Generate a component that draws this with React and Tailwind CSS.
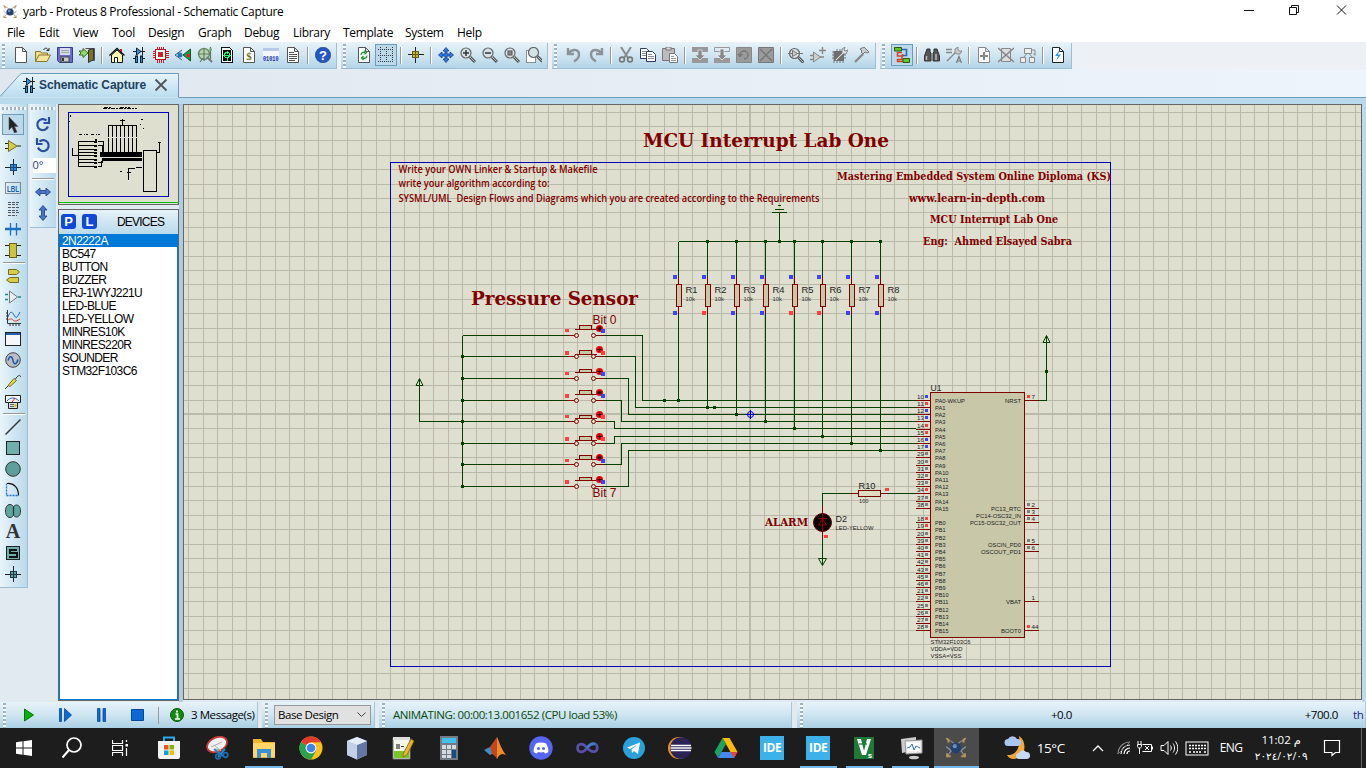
import React from "react";

const UI = "font-['Open_Sans','Noto_Sans',sans-serif]";

function I({ children, s = 16, crisp = false, className = "" }) {
  return (
    <svg
      width={s}
      height={s}
      viewBox="0 0 16 16"
      fill="none"
      shapeRendering={crisp ? "crispEdges" : "auto"}
      className={"shrink-0 " + className}
    >
      {children}
    </svg>
  );
}

const Page = ({ stroke = "#555", fill = "#fff" }) => (
  <path d="M2.500 .5h7l4 4v11h-11z M9.500 .5v4h4" fill={fill} stroke={stroke} />
);
const Lens = ({ children, cx = 6, cy = 6 }) => (
  <>
    <path d={`M${cx + 4} ${cy + 4}l5 5`} stroke="#555" strokeWidth="3" />
    <path d={`M${cx + 4} ${cy + 4}l4.6 4.6`} stroke="#bbb" strokeWidth="1" />
    <circle cx={cx} cy={cy} r="5" fill="#d5e2e8" stroke="#666" strokeWidth="1.200" />
    {children}
  </>
);
const Caps = ({ c = "#2f93d6" }) => (
  <>
    <path d="M2 4.500h12M2 11.500h3M11 11.500h3" stroke="#222" />
    <path d="M5.500 1v7l4.500-3.500z" fill={c} stroke="#123" />
    <path d="M11.500 0v8.500" stroke="#222" />
    <rect x="4.500" y="9" width="2" height="6.500" fill={c} stroke="#123" />
    <rect x="9.500" y="9" width="2" height="6.500" fill={c} stroke="#123" />
  </>
);

const icons = {
  newfile: <I><Page /></I>,
  open: (
    <I>
      <path d="M.5 14V4.500h5l1 1.500h6V8" fill="#f3dc8a" stroke="#8a7428" />
      <path d="M.5 14.500L4 8h11.500l-3.500 6.500z" fill="#f6e49c" stroke="#8a7428" />
      <path d="M8.500 3c2-3 4-2 5 1M11.500 3.500h2.500V1" stroke="#222" />
    </I>
  ),
  save: (
    <I>
      <path d="M.5 .5h15v15h-13l-2-2z" fill="#6a6cc8" stroke="#3a3a90" />
      <rect x="3" y="1" width="10" height="7" fill="#d6daea" />
      <path d="M4 3.500h8M4 5.500h8" stroke="#9aa" />
      <rect x="4" y="10" width="8" height="5" fill="#ccc" stroke="#444" />
      <path d="M6 11v3" stroke="#333" strokeWidth="2" />
    </I>
  ),
  exit: (
    <I>
      <path d="M6.500 1.500h9v12h-3" fill="#ddd" stroke="#555" />
      <path d="M9.500 3l5-1.500v11l-5 3z" fill="#777329" stroke="#333" />
      <path d="M0 4h4V1.500l5 4.500-5 4.500V8H0l2-2z" fill="#8fe06a" stroke="#3a6a20" />
    </I>
  ),
  home: (
    <I>
      <path d="M11 2h2v4h-2z" fill="#d22" />
      <path d="M2.500 8v7.500h11V8L8 3z" fill="#fff7b0" stroke="#111" />
      <path d="M.5 8.500L8 1.500l7.500 7" stroke="#111" strokeWidth="1.300" />
      <path d="M5.500 15.500v-5h3v5" fill="#fff" stroke="#111" />
    </I>
  ),
  caps: <I><Caps /></I>,
  chip: (
    <I crisp>
      <path d="M4.500 0v16M6.500 0v16M8.500 0v16M10.500 0v16M0 4.500h16M0 6.500h16M0 8.500h16M0 10.500h16" stroke="#cc1f1f" />
      <rect x="2.500" y="2.500" width="10" height="10" rx="1" fill="#fff" stroke="#b01818" />
      <rect x="5" y="5" width="5" height="5" fill="#c22" />
    </I>
  ),
  eye: (
    <I>
      <path d="M7 3L0 8l7 5" fill="#cfe2ee" stroke="#357" />
      <circle cx="5" cy="8" r="2.500" fill="#2a78b8" />
      <path d="M15.500 2v12L8 8z" fill="#1d9a45" stroke="#135a2a" />
      <path d="M12 7h3v3h-3z" fill="#d22" />
    </I>
  ),
  gerber: (
    <I>
      <circle cx="7" cy="7" r="5.500" fill="#b9d4b8" stroke="#6d8f6d" strokeWidth="1.500" />
      <path d="M1 7h12M7 1v13M3 15l3-4M13.500 0v12" stroke="#5c7d5c" strokeWidth="1.200" />
      <path d="M10 10l5 5" stroke="#777" strokeWidth="2" />
      <circle cx="13.500" cy="2.500" r="1.500" fill="#6fae6f" />
    </I>
  ),
  design: (
    <I crisp>
      <path d="M2.500 .5h8l3 3v12h-11z" fill="#fff" stroke="#111" />
      <path d="M4 3h8v11H4z" fill="#0a0a0a" />
      <circle cx="8" cy="8" r="2.500" stroke="#2f6" />
      <path d="M4 8.500h8M8.500 4v3M8.500 11v3" stroke="#2f6" />
    </I>
  ),
  bom: (
    <I>
      <Page />
      <text x="8" y="12.500" textAnchor="middle" fontSize="11" fontWeight="700" fontFamily="Liberation Serif,serif" fill="#7a7420">$</text>
    </I>
  ),
  bits: (
    <I>
      <rect x="0" y="1" width="16" height="3" fill="#b9c9e6" />
      <rect x="0" y="4" width="16" height="5" fill="#f3f6fb" />
      <text x="0" y="14" fontSize="6.500" fontWeight="700" fontFamily="Liberation Mono,monospace" fill="#2c35a8" textLength="15.500" lengthAdjust="spacingAndGlyphs">01010</text>
    </I>
  ),
  notes: <I><Page /><path d="M4 5.500h5M4 7.500h8M4 9.500h8M4 11.500h8M4 13.500h6" stroke="#555" /></I>,
  help: (
    <I>
      <circle cx="8" cy="8" r="7.700" fill="#2458c0" stroke="#143a8c" strokeWidth=".6" />
      <text x="8" y="12.500" textAnchor="middle" fontSize="13" fontWeight="700" fontFamily="Liberation Sans,sans-serif" fill="#fff">?</text>
    </I>
  ),
  refresh: (
    <I>
      <Page />
      <path d="M5 8c0-3 3-3 4.500-2.500M8.500 3.500l2 2-2 2M11 8.500c0 3-3 3-4.500 2.500M7.500 9l-2 2 2 2" stroke="#1a9a2a" strokeWidth="1.300" />
    </I>
  ),
  grid: (
    <I crisp>
      <path d="M0 2.500h16M0 8.500h16M0 14.500h16" stroke="#334" strokeDasharray="1 1" />
      <path d="M2.500 0v16M8.500 0v16M14.500 0v16" stroke="#334" strokeDasharray="1 1" />
    </I>
  ),
  origin: (
    <I crisp>
      <path d="M0 7.500h16M7.500 0v16" stroke="#222" />
      <rect x="4.500" y="4.500" width="6" height="6" fill="#c9b92e" stroke="#665d10" />
      <path d="M5 7.500h5M7.500 5v5" stroke="#665d10" />
    </I>
  ),
  pan: (
    <I>
      <path d="M8 .5l3 3.500H9v3h3V5l3.500 3L12 11V9H9v3h2l-3 3.500L5 12h2V9H4v2L.5 8 4 5v2h3V4H5z" fill="#2f78e0" stroke="#123c8c" strokeWidth=".8" />
    </I>
  ),
  zin: <I><Lens><path d="M3 6h6M6 3v6" stroke="#333" strokeWidth="1.500" /></Lens></I>,
  zout: <I><Lens><path d="M3 6h6" stroke="#333" strokeWidth="1.500" /></Lens></I>,
  zall: <I><Lens><rect x="4" y="4" width="4" height="4" fill="#888" stroke="#555" /></Lens></I>,
  zarea: (
    <I>
      <path d="M.5 3.500h9v12h-9z" fill="#fff" stroke="#333" strokeDasharray="1 1" />
      <Lens cx={7.5} cy={5.5} />
    </I>
  ),
  undo: <I><path d="M2 1v6h6M2.500 6.500C6 1.500 13 2 13 7.500c0 4-2.500 5.500-5 7" stroke="#8b9399" strokeWidth="2.400" /></I>,
  redo: <I><path d="M14 1v6H8M13.500 6.500C10 1.500 3 2 3 7.500c0 4 2.500 5.500 5 7" stroke="#8b9399" strokeWidth="2.400" /></I>,
  cut: (
    <I>
      <path d="M3 0l7 11M13 0L6 11" stroke="#8b8b8b" strokeWidth="2" />
      <circle cx="4" cy="12.500" r="2.400" stroke="#777" strokeWidth="1.600" />
      <circle cx="12" cy="12.500" r="2.400" stroke="#777" strokeWidth="1.600" />
    </I>
  ),
  copy: (
    <I>
      <path d="M.5 1.500h6l3 3v7h-9z" fill="#fff" stroke="#2b3a60" />
      <path d="M2 4.500h4M2 6.500h5M2 8.500h5" stroke="#889" />
      <path d="M6.500 4.500h6l3 3v7h-9z" fill="#fff" stroke="#2b3a60" />
      <path d="M8 7.500h4M8 9.500h6M8 11.500h6" stroke="#889" />
    </I>
  ),
  paste: (
    <I>
      <path d="M.5 1.500h12v12h-12z" fill="#bcbcbc" stroke="#777" />
      <path d="M4 0h5v3H4z" fill="#ddd" stroke="#777" />
      <path d="M7.500 6.500h5l3 3v6h-8z" fill="#f5f5f5" stroke="#777" />
      <path d="M9 9.500h3M9 11.500h5M9 13.500h5" stroke="#999" />
    </I>
  ),
  blkcopy: (
    <I>
      <path d="M0 0h16v5H0zM0 11h16v5H0z" fill="#999" />
      <path d="M6 3h4v5h3l-5 5-5-5h3z" fill="#888" stroke="#ddd" strokeWidth=".8" />
    </I>
  ),
  blkmove: (
    <I>
      <path d="M.5 .5h15v4H.5z" stroke="#999" />
      <path d="M0 11h16v5H0z" fill="#999" />
      <path d="M6 2h4v6h3l-5 5-5-5h3z" fill="#888" stroke="#eee" strokeWidth=".8" />
    </I>
  ),
  blkrot: (
    <I>
      <path d="M.5 .5h15v15H.5z" fill="#9b9b9b" stroke="#888" />
      <path d="M4 8a4 4 0 1 1 4 4M2 7l2 2.500L6.500 7" stroke="#777" strokeWidth="1.400" />
    </I>
  ),
  blkdel: (
    <I>
      <path d="M.5 .5h15v15H.5z" fill="#9b9b9b" stroke="#777" />
      <path d="M2 2l12 12M14 2L2 14" stroke="#777" strokeWidth="1.500" />
    </I>
  ),
  pick: <I><Lens cx={6.5} cy={6.5}><path d="M0 6.500h4M4.500 3.500v6l5-3zM9 6.500h6" stroke="#777" fill="#ccc" /></Lens></I>,
  make: (
    <I>
      <path d="M3.500 5v10l7-5z" fill="#ccc" stroke="#888" />
      <path d="M0 8.500h3M0 12.500h3M10 10h4M12.500 0v7M9 3.500h7" stroke="#888" strokeWidth="1.400" />
    </I>
  ),
  pkg: (
    <I>
      <path d="M2 4v12M5 2v14M8 2v14M11 8v8M0 5h14M0 8h14M0 11h14" stroke="#777" />
      <path d="M2 4h10v10H2z" fill="#6f6f6f" />
      <path d="M3 13l7-7V2l3-2-1 3 1 1 3-1-2 4h-3l-7 7z" fill="#ddd" stroke="#777" strokeWidth=".8" />
    </I>
  ),
  decomp: (
    <I>
      <path d="M1 15L9 7" stroke="#888" strokeWidth="2.400" />
      <path d="M6 2l4-2 5 5-2 1-2-1-2 2-2-2 1-1z" fill="#ccc" stroke="#777" />
    </I>
  ),
  auto: (
    <I>
      <path d="M6 2.500h6.500v6H9" stroke="#2468c8" strokeWidth="1.600" />
      <path d="M8 5.500H3.500v3.500H8.500v-2M8 9.500v3H3.500v2h6" stroke="#d84020" strokeWidth="1.500" />
      <path d="M.5 .5h7v3.500h-7zM9 11.500h6.500v4H9z" fill="#63c62a" stroke="#2a5a12" />
    </I>
  ),
  find: (
    <I>
      <path d="M3 2h3v3l1 1v8H.5V9zM13 2h-3v3L9 6v8h6.500V9z" fill="#555" stroke="#333" />
      <path d="M2.500 9v4M12 7v6" stroke="#bbb" strokeWidth="1.500" />
    </I>
  ),
  prop: (
    <I>
      <path d="M0 2.500h6M0 5.500h6M1 14l9-9" stroke="#888" strokeWidth="1.400" />
      <path d="M9 6V2l3-2v3l1 1h3l-2 3h-3z" fill="#ccc" stroke="#777" strokeWidth=".8" />
      <path d="M10.500 16l2.500-6.500 2.500 6.500M11 14h4" stroke="#777" strokeWidth="1.200" />
    </I>
  ),
  addsh: <I><Page stroke="#888" /><path d="M8 5v8M4 9h8" stroke="#888" strokeWidth="2.200" /></I>,
  delsh: (
    <I>
      <path d="M3.500 1.500h9v13h-9z" fill="#ddd" stroke="#888" />
      <path d="M0 1l16 14M16 1L0 15" stroke="#888" strokeWidth="1.600" />
    </I>
  ),
  hier: (
    <I>
      <path d="M4.500 1.500h7v5h-7z" fill="#eee" stroke="#888" />
      <path d="M7 6.500L3 11M9 6.500L13 11M12 3h3v5M13.500 6.500L15 8.500" stroke="#888" />
      <path d="M.5 10.500h5v5h-5zM9.500 10.500h5v5h-5z" fill="#eee" stroke="#888" />
    </I>
  ),
  erc: <I><Page stroke="#222" /><path d="M9.500 3L5 9h3l-2 5 5-6.500H8z" fill="#2b9be8" /></I>,

  arrow: <I><path d="M4 0v13l3-3 2.500 6 2.500-1-2.500-5.500H13z" fill="#222" stroke="#555" strokeWidth=".6" /></I>,
  comp: <I><path d="M0 5.500h4M0 10.500h4M12 8h4" stroke="#222" /><path d="M3.500 2.500v11l8.500-5.500z" fill="#d8cb48" stroke="#756c18" /></I>,
  junc: <I crisp><path d="M0 8h16M8 0v16" stroke="#222" /><rect x="5" y="5" width="6" height="6" fill="#2e8fe0" stroke="#124a80" /><path d="M5 8h6M8 5v6" stroke="#124a80" /></I>,
  lbl: (
    <I>
      <rect x=".5" y="2.500" width="15" height="11" stroke="#333" strokeDasharray="1 1" />
      <text x="2" y="11.500" fontSize="8.500" fontWeight="700" fontFamily="Liberation Sans,sans-serif" fill="#1d5fb0" textLength="12" lengthAdjust="spacingAndGlyphs">LBL</text>
    </I>
  ),
  script: <I crisp><path d="M3 1.500h11M3 3.500h10M3 6.500h11M3 9.500h10M3 11.500h11M3 14.500h9" stroke="#555" strokeDasharray="3 1" /></I>,
  bus: <I><path d="M0 7h16" stroke="#1e6fc0" strokeWidth="2.500" /><path d="M5.500 1v6M11.500 1v6M5.500 7v6.500M11.500 7v6.500" stroke="#1e6fc0" strokeWidth="1.300" /></I>,
  sub: <I crisp><path d="M0 2.500h16M0 12.500h16" stroke="#222" /><rect x="4.500" y=".5" width="7" height="14" fill="#cfc23c" stroke="#6a621a" /></I>,
  term: <I><path d="M3.500 1.500h8l3 2.500-3 2.500h-8zM13.500 9.500H5L1.500 12 5 14.500h8.500z" fill="#d8cb48" stroke="#756c18" /></I>,
  devpin: <I><path d="M4.500 2v12l8-6z" fill="#e4f0f6" stroke="#777" /><path d="M0 5.500h3M0 10.500h3M13 8h3" stroke="#1d8a80" strokeWidth="1.300" /></I>,
  graph: (
    <I>
      <path d="M2.500 0v13.500H16M1 3h1M1 6h1M1 9h1M5 14v2M8 14v2M11 14v2M14 14v2" stroke="#333" />
      <path d="M3 7c2-6 4-6 6-2s3 3 6-3" stroke="#2264c8" />
      <path d="M3 10c2-1 3-2 5 0s4 1 7-1" stroke="#d03a20" />
    </I>
  ),
  win: <I crisp><rect x=".5" y="1.500" width="15" height="13" fill="#f4f6f8" stroke="#222" /><rect x="1" y="2" width="14" height="2" fill="#2a5ca8" /></I>,
  gen: <I><circle cx="8" cy="8" r="7.300" fill="#b8bec4" stroke="#444" /><path d="M3 8.500c1.500-5 4-5 5 0s3.500 4 5-1" stroke="#1b55b0" strokeWidth="1.500" /></I>,
  probe: <I><path d="M0 16l3.500-3.500" stroke="#333" /><path d="M3 12.500l6-7 2.500 2L5 13.500z" fill="#e6db52" stroke="#756c18" /><path d="M10.500 6c2-3 4-5 5.500-2" stroke="#333" /></I>,
  meter: (
    <I>
      <path d="M.5 1.500h15v7h-15z" fill="#f4f4f4" stroke="#222" />
      <path d="M2 7c3-4 8-4 12 0" stroke="#2264c8" />
      <path d="M7 8l3-4" stroke="#d22" />
      <path d="M3.500 8.500h9v6h-9z" fill="#ddd" stroke="#222" />
      <path d="M5 10.500h4M5 12.500h4" stroke="#666" /><circle cx="10.500" cy="11.500" r="1.300" fill="#e0b810" />
    </I>
  ),
  line: <I><path d="M.5 15.500l15-15" stroke="#333" strokeWidth="1.400" /></I>,
  box: <I crisp><rect x="1.500" y="1.500" width="13" height="13" fill="#6fb0ac" stroke="#222" /></I>,
  circ: <I><circle cx="8" cy="8" r="7.300" fill="#5c9f9b" stroke="#333" /></I>,
  arc: <I><path d="M1.500 1.500v12h12" stroke="#1d6fd0" strokeWidth="1.300" strokeDasharray="2 1" /><path d="M2 1.500c7-.5 11.500 4 11.500 12" stroke="#111" strokeWidth="1.200" /></I>,
  path: <I><path d="M5 1.500c2 0 3 1.500 3.500 2.500C9 3 10 2 11.500 2c2.500 0 4 2.500 4 6s-1.500 6-4 6c-1.500 0-2.500-1-3-2-.5 1-1.500 2.500-3.500 2.500C2 14.500.5 11.500.5 8S2 1.500 5 1.500z" fill="#5fa5a0" stroke="#333" /><path d="M8.500 4v8" stroke="#333" strokeWidth="1.300" /></I>,
  text: <span className="font-['Liberation_Serif',serif] font-bold text-[20px] leading-[21px] text-[#333]">A</span>,
  sym: <I crisp><rect x="1.500" y="1.500" width="13" height="13" fill="#6fb0ac" stroke="#222" strokeWidth="1.500" /><path d="M12 4.500H4.500v3.500H11.500v3.500H4" stroke="#111" strokeWidth="2" /></I>,
  mark: <I crisp><path d="M0 8h16M8 0v16" stroke="#222" /><rect x="5" y="5" width="6" height="6" fill="#5fa5a0" stroke="#234" /><path d="M5 8h6M8 5v6" stroke="#234" /></I>,
  cw: <I><path d="M13 9.500a5.500 5.500 0 1 1-1.500-6M14 0v6H8.500" stroke="#2a4f9e" strokeWidth="2.200" /></I>,
  ccw: <I><path d="M3 9.500a5.500 5.500 0 1 0 1.500-6M2 0v6h5.500" stroke="#2a4f9e" strokeWidth="2.200" /></I>,
  fliph: <I><path d="M.5 8L5 4v2.500h6V4l4.500 4-4.500 4V9.500H5V12z" fill="#4674c8" stroke="#1d3a78" strokeWidth=".8" /></I>,
  flipv: <I><path d="M8 .5L4 5h2.500v6H4l4 4.500L12 11H9.500V5H12z" fill="#4674c8" stroke="#1d3a78" strokeWidth=".8" /></I>,
};

function Logo({ s = 16 }) {
  return (
    <svg width={s} height={s} viewBox="0 0 16 16" fill="none" className="shrink-0">
      <path d="M2 2.500c4 .5 8 5 11.500 10.500M14 2.500C10 3 6 8 2.500 13M1.500 7c4 4.500 9 4.500 13 0" stroke="#8c929c" strokeWidth=".8" />
      <circle cx="8" cy="8" r="3.600" fill="#26406e" />
      <circle cx="7.200" cy="6.800" r="1.400" fill="#6b8fc0" />
      <path d="M1.500 1.500l1.500 1v2M14.500 1.500l-1.500 1v2M2 11.500v2h2.500M14 11.500v2h-2.500" stroke="#b8975a" strokeWidth="1.200" />
    </svg>
  );
}

const HGrip = () => (
  <div className="w-[3px] h-[25px] ml-[2px] mt-[1px] bg-[repeating-linear-gradient(180deg,#9db3c0_0,#9db3c0_2px,#f4fafd_2px,#f4fafd_4px)]" />
);

function Toolbar({ items, pressed, gripW = "w-[11px]" }) {
  return (
    <div className="flex h-[26px] pr-[2px] border-r border-b border-[#9dbfd3] bg-linear-to-b from-[#e6f2f9] via-[#cfe5f1] to-[#b2d5e8]">
      <div className={gripW + " shrink-0"}><HGrip /></div>
      {items.map((n, i) =>
        n === "|" ? (
          <div key={i} className="w-2 shrink-0 flex justify-center pt-[4px]">
            <div className="w-[2px] h-[17px] bg-[#999] border-r border-white" />
          </div>
        ) : (
          <div
            key={i}
            className={
              "w-[22px] h-[22px] mt-[1px] shrink-0 flex items-center justify-center " +
              (pressed.includes(n) ? "border border-[#6b9dbb] bg-[#bcd9ea]" : "")
            }
          >
            {icons[n]}
          </div>
        )
      )}
    </div>
  );
}

const menu = [
  ["File", "w-8"], ["Edit", "w-[34px]"], ["View", "w-[39px]"], ["Tool", "w-9"], ["Design", "w-[50px]"],
  ["Graph", "w-[46px]"], ["Debug", "w-[49px]"], ["Library", "w-[50px]"], ["Template", "w-[62px]"],
  ["System", "w-[52px]"], ["Help", "w-10"],
];

const rows = [335.5, 356.5, 378.5, 400.5, 421.5, 443.5, 464.5, 486.5];
const nets = [400.5, 407.5, 414.5, 421.5, 428.5, 436.5, 443.5, 450.5];
const drops = [642.5, 635.5, 628.5, 621.5, 614.5, 614.5, 621.5, 628.5];
const caps = [[325.5, 329.5], [350.5, 354.5], [369.5, 372.5], [390.5, 394.5], [415.5, 418.5], [436.5, 440.5], [455.5, 459.5], [477.5, 480.5]];
const lamps = [328.5, 349.5, 371.5, 392.5, 414.5, 436.5, 457.5, 479.5];
const marks = [331, 353, 374, 396, 417, 439, 461, 482];
const state = ["b", "r", "b", "b", "r", "r", "b", "b"];
const res = [678.5, 707.5, 736.5, 765.5, 794.5, 822.5, 851.5, 880.5];
const C = { b: "#4040ff", r: "#ff4040", g: "#808080" };
const G = "#004000";
const M = "#800000";

const wires =
  rows.map((y, i) => `M462.500 ${y}H567M604 ${y}H${drops[i]}V${nets[i]}H916`).join("") +
  "M462.500 335.500V486.500M462.500 421.500H419.500V379" +
  "M678.500 241.500H880.500M779.500 241.500V212" +
  res.map((x, i) => `M${x} 241.500V277M${x} 314V${nets[i]}`).join("") +
  "M822.500 506V493.500H851M888 493.500H916M822.500 539V565M1039 400.500H1046.500V336";

const pinsL = [
  ["PA0-WKUP", "10", "b"], ["PA1", "11", "r"], ["PA2", "12", "b"], ["PA3", "13", "b"], ["PA4", "14", "r"],
  ["PA5", "15", "r"], ["PA6", "16", "b"], ["PA7", "17", "b"], ["PA8", "29", "g"], ["PA9", "30", "g"],
  ["PA10", "31", "g"], ["PA11", "32", "g"], ["PA12", "33", "g"], ["PA13", "34", "r"], ["PA14", "37", "g"],
  ["PA15", "38", "g"], null, ["PB0", "18", "r"], ["PB1", "19", "r"], ["PB2", "20", "g"], ["PB3", "39", "g"],
  ["PB4", "40", "g"], ["PB5", "41", "g"], ["PB6", "42", "g"], ["PB7", "43", "g"], ["PB8", "45", "g"],
  ["PB9", "46", "g"], ["PB10", "21", "g"], ["PB11", "22", "g"], ["PB12", "25", "g"], ["PB13", "26", "g"],
  ["PB14", "27", "g"], ["PB15", "28", "g"],
];
const pinsR = [
  ["NRST", "7", "r", 400.5, 16], ["PC13_RTC", "2", "g", 508.5, 30], ["PC14-OSC32_IN", "3", "g", 515.5, 45],
  ["PC15-OSC32_OUT", "4", "g", 522.5, 51], ["OSCIN_PD0", "5", "g", 544.5, 33], ["OSCOUT_PD1", "6", "g", 551.5, 40],
  ["VBAT", "1", null, 601.5, 15], ["BOOT0", "44", "r", 630.5, 20],
];

const SANS = "Liberation Sans, Arial, sans-serif";
const SLAB = "DejaVu Serif, Liberation Serif, serif";

function Tx({ x, y, w, s, f = SANS, c = "#222", b, end, children }) {
  return (
    <text
      x={x} y={y} fontSize={s} fontFamily={f} fill={c} fontWeight={b || 400}
      textLength={w} lengthAdjust="spacingAndGlyphs" textAnchor={end ? "end" : "start"}
      style={{ whiteSpace: "pre" }}
    >
      {children}
    </text>
  );
}

function Schematic() {
  const v = [];
  for (let k = -39; k <= 42; k++) v.push(Math.round(750 + k * 14.4) + 0.5);
  const h = [];
  for (let k = -21; k <= 19; k++) h.push(Math.round(414 + k * 14.4) + 0.5);
  const dot = (x, y) => <rect key={x + "-" + y} x={x - 1.5} y={y - 1.5} width="3" height="3" fill={G} />;
  return (
    <svg viewBox="184 105 1177 594" className="w-[1177px] h-[594px] block" fill="none" shapeRendering="crispEdges">
      <rect x="184" y="105" width="1177" height="594" fill="#dfdfcf" />
      <path d={v.map((x) => `M${x} 105v594`).join("") + h.map((y) => `M184 ${y}h1177`).join("")} stroke="#babaaa" />
      <path d="M750 105v594M184 414h1177" stroke="#babaaa" strokeWidth="2" />
      <rect x="390.500" y="162.500" width="720" height="504" stroke="#0000b4" />
      <path d={wires} stroke={G} />
      {rows.slice(1).map((y) => dot(462.5, y))}
      {res.slice(1).map((x) => dot(x, 241.5))}
      {dot(779.5, 241.5)}
      {res.map((x, i) => dot(x, nets[i]))}
      {dot(664.5, 400.5)}{dot(714.5, 407.5)}{dot(1046.5, 371.5)}
      <path d="M772 212.500h15M775 209.500h9M778 205.500h3" stroke={G} />
      <g stroke={G} shapeRendering="auto">
        <path d="M419.500 378.500l-3.500 7h7zM1046.500 335.500l-3.500 7h7zM822.500 565.500l-4-7h8z" />
      </g>

      {rows.map((y, i) => (
        <g key={y}>
          <path d={`M567 ${y}h8M596 ${y}h8M575 ${caps[i][1]}h22`} stroke={M} />
          <rect x="579.500" y={caps[i][0]} width="12" height={caps[i][1] - caps[i][0]} fill="#c8c8a8" stroke={M} />
          <g shapeRendering="auto">
            <circle cx="576.500" cy={y} r="2" fill="#dfdfcf" stroke={M} />
            <circle cx="593.500" cy={y} r="2" fill="#dfdfcf" stroke={M} />
            <circle cx="599.500" cy={lamps[i]} r="3.500" fill="#f00000" />
            <path d={`M597.500 ${lamps[i]}h4M599.500 ${lamps[i] - 2}v4`} stroke="#300" strokeWidth={i % 3 ? 1 : 2} />
          </g>
          <rect x="565" y={marks[i] - 2} width="4" height={i % 2 ? 4 : 3} fill={C.r} />
          <rect x="601" y={marks[i] - 2} width="4" height="4" fill={C[state[i]]} />
        </g>
      ))}

      {res.map((x, i) => (
        <g key={x}>
          <path d={`M${x} 277V314`} stroke={M} />
          <rect x={x - 2} y="284.500" width="5" height="22" fill="#c8c8a8" stroke={M} />
          <rect x={x - 5.5} y="275" width="4" height="4" fill={C.b} />
          <rect x={x - 5.5} y="311" width="4" height="4" fill={C[state[i]]} />
          <Tx x={x + 7} y="293" w="12" s="9.500">{"R" + (i + 1)}</Tx>
          <Tx x={x + 7} y="301" w="9.500" s="6" c="#333">10k</Tx>
        </g>
      ))}

      <rect x="930.500" y="392.500" width="94" height="245" fill="#c8c8a8" stroke={M} />
      {pinsL.map((p, i) => {
        if (!p) return null;
        const y = Math.floor(400.3 + i * 7.2) + 0.5;
        return (
          <g key={i}>
            <path d={`M916 ${y}h14`} stroke={M} />
            <rect x="925" y={y - 5.5} width="3" height="3" fill={C[p[2]]} />
            <Tx x="917" y={y - 1.5} w="7" s="6" c="#222">{p[1]}</Tx>
            <Tx x="935" y={y + 2.5} w={p[0].length > 4 ? 30 : p[0].length === 4 ? 13.5 : 10.5} s="6">{p[0]}</Tx>
          </g>
        );
      })}
      {pinsR.map(([n, k, c, y, w]) => (
        <g key={n}>
          <path d={`M1025 ${y}h14`} stroke={M} />
          {c && <rect x="1027" y={y - 5.5} width="3" height="3" fill={C[c]} />}
          <Tx x="1031.500" y={y - 1.5} w={k.length * 3.5} s="6" c="#222">{k}</Tx>
          <Tx x="1021" y={y + 2.5} w={w} s="6" end>{n}</Tx>
        </g>
      ))}
      <Tx x="930.500" y="391" w="11" s="9.500">U1</Tx>
      <Tx x="930.500" y="644" w="40" s="6">STM32F103C6</Tx>
      <Tx x="930.500" y="651" w="32" s="6">VDDA=VDD</Tx>
      <Tx x="930.500" y="658" w="31" s="6">VSSA=VSS</Tx>

      <path d="M851 493.500h37M822.500 506v8M822.500 531v8" stroke={M} />
      <rect x="858.500" y="490.500" width="22" height="6" fill="#dcdcc4" stroke={M} />
      <rect x="885" y="488" width="4" height="3" fill={C.r} />
      <rect x="824" y="535" width="4" height="3" fill={C.r} />
      <Tx x="858.500" y="489" w="17" s="9.500">R10</Tx>
      <Tx x="859" y="503" w="9.500" s="6" c="#333">100</Tx>
      <g shapeRendering="auto">
        <circle cx="822.500" cy="522.500" r="9" fill="#0a0000" stroke="#500" />
        <path d="M822.500 514v17M818.500 525h8l-4-6zM818 518.500h9" stroke="#900000" />
        <circle cx="750.500" cy="414.500" r="3" stroke="#0000c8" />
        <path d="M746 414.500h9M750.500 410v9" stroke="#0000c8" />
      </g>
      <Tx x="835.500" y="522" w="11.500" s="9.500">D2</Tx>
      <Tx x="835.500" y="530" w="38" s="6">LED-YELLOW</Tx>
      <Tx x="592.500" y="324" w="24" s="12" c={M}>Bit 0</Tx>
      <Tx x="592.500" y="497" w="24" s="12" c={M}>Bit 7</Tx>

      <Tx x="643" y="147" w="246" s="19" f={SLAB} c={M} b={700}>MCU Interrupt Lab One</Tx>
      <Tx x="471" y="305" w="167" s="19" f={SLAB} c={M} b={700}>Pressure Sensor</Tx>
      <Tx x="765" y="526" w="43" s="11" f={SLAB} c={M} b={700}>ALARM</Tx>
      <Tx x="837" y="180" w="274" s="10.500" f={SLAB} c={M} b={700}>Mastering Embedded System Online Diploma (KS)</Tx>
      <Tx x="909" y="202" w="136" s="10.500" f={SLAB} c={M} b={700}>www.learn-in-depth.com</Tx>
      <Tx x="930" y="223" w="128" s="10.500" f={SLAB} c={M} b={700}>MCU Interrupt Lab One</Tx>
      <Tx x="923" y="245" w="149" s="10.500" f={SLAB} c={M} b={700}>Eng:  Ahmed Elsayed Sabra</Tx>
      <Tx x="398.500" y="173" w="199" s="10" f="Open Sans, sans-serif" c={M} b={600}>{"Write your OWN Linker & Startup & Makefile"}</Tx>
      <Tx x="398.500" y="187" w="151" s="10" f="Open Sans, sans-serif" c={M} b={600}>write your algorithm according to:</Tx>
      <Tx x="398.500" y="202" w="421" s="10" f="Open Sans, sans-serif" c={M} b={600}>{"SYSML/UML  Design Flows and Diagrams which you are created according to the Requirements"}</Tx>
    </svg>
  );
}

function Overview() {
  return (
    <svg viewBox="59 105 119 99" className="w-[119px] h-[99px] block" fill="none" shapeRendering="crispEdges">
      <rect x="59" y="105" width="119" height="99" fill="#dfdfcf" />
      <path d="M103 108.500h34M104 107.500h8M120 107.500h10" stroke="#000" strokeDasharray="4 1 2 1" />
      <rect x="68.500" y="112.500" width="100" height="84" stroke="#0000c0" />
      <path d="M59 202.500h119" stroke="#00c000" />
      <path d="M79 134.500h24" stroke="#000" strokeDasharray="3 2 1 1 2 3" />
      <path d="M78.500 141.500h16M78.500 145.500h16M78.500 149.500h16M78.500 152.500h16M78.500 155.500h16M78.500 159.500h16M78.500 162.500h16M78.500 166.500h16M78.500 141v26M72.500 148v7h6M98 141.500h5v11M98 145.500h4v7M98 162.500h4v-5M98 166.500h3v-6" stroke="#000" />
      <path d="M94 141.500h3M94 145.500h3M94 149.500h3M94 152.500h3M94 155.500h3M94 159.500h3M94 162.500h3M94 166.500h3M95 139.500h2" stroke="#000" strokeWidth="2" />
      <path d="M100 152h42v5h-42zM103 158h39v3h-39z" fill="#000" />
      <path d="M108.500 125.500h28M122.500 119v6M120 120.500h5" stroke="#000" />
      {[108.5, 112.5, 116.5, 120.5, 124.5, 128.5, 132.5, 136.5].map((x) => (
        <path key={x} d={`M${x} 125v12M${x} 138v15`} stroke="#000" />
      ))}
      <path d="M143.500 150.500h13v41h-13zM157 152.500h2.500v-11M158 142.500h3M128.500 180v-12h6M136 167.500h6M127 172.500h4M120 171.500h2M70 114.500v2M141 119.500h2M140 124.500h1M143 128.500h1M69 121.500h1" stroke="#000" />
    </svg>
  );
}

const VSep = () => <div className="w-[22px] h-[2px] my-[1px] mx-[1px] bg-[#999] border-b border-white shrink-0" />;
const leftA = ["arrow", "comp", "junc", "lbl", "script", "bus", "sub"];
const leftB = ["term", "devpin", "graph", "win", "gen", "probe", "meter"];
const leftC = ["line", "box", "circ", "arc", "path", "text", "sym", "mark"];
const VItem = ({ n }) => (
  <div className={"w-[22px] h-[21px] shrink-0 flex items-center justify-center " + (n === "arrow" ? "border border-[#6b9dbb] bg-[#bcd9ea]" : "")}>
    {icons[n]}
  </div>
);
const VGrip = () => (
  <div className="h-[3px] w-[24px] mt-[3px] mb-[3px] shrink-0 bg-[repeating-linear-gradient(90deg,#9db3c0_0,#9db3c0_2px,#f4fafd_2px,#f4fafd_4px)]" />
);

const devices = ["2N2222A", "BC547", "BUTTON", "BUZZER", "ERJ-1WYJ221U", "LED-BLUE", "LED-YELLOW", "MINRES10K", "MINRES220R", "SOUNDER", "STM32F103C6"];

function PL({ children }) {
  return (
    <div className="w-[15px] h-[15px] mb-[2px] rounded-[3px] bg-[#1049d8] text-white text-[13px] font-bold leading-[15px] text-center font-['Liberation_Sans',sans-serif]">
      {children}
    </div>
  );
}

const T = ({ children, s = 24, vb = "0 0 24 24" }) => (
  <svg width={s} height={s} viewBox={vb} fill="none" className="shrink-0">{children}</svg>
);
const ide = (
  <div className="w-[24px] h-[24px] bg-[#3db2e8] text-white font-bold text-[12px] leading-[24px] text-center tracking-[-0.4px] font-['Open_Sans',sans-serif]">IDE</div>
);
const task = [
  ["store", <T key="i"><path d="M7 5V1.500h10V5" stroke="#2aa8e8" strokeWidth="2" /><path d="M1 5h22v16a2 2 0 0 1-2 2H3a2 2 0 0 1-2-2z" fill="#f2f2f2" /><path d="M7 9h4.500v4.500H7z" fill="#f25022" /><path d="M12.500 9H17v4.500h-4.500z" fill="#7fba00" /><path d="M7 14.500h4.500V19H7z" fill="#00a4ef" /><path d="M12.500 14.500H17V19h-4.500z" fill="#ffb900" /></T>],
  ["snip", <T key="i"><ellipse cx="12" cy="8.500" rx="10.500" ry="7" transform="rotate(-25 12 8.500)" fill="#f1f1f1" stroke="#c83a34" strokeWidth="1.800" /><path d="M6 11l11-5M10 13l6 1M9 9l7 6" stroke="#aaa" /><path d="M9 13l9 7M20 13l-7 8" stroke="#2c86c8" strokeWidth="2" /><circle cx="13" cy="20.500" r="2.300" stroke="#1b6fb0" strokeWidth="1.700" /><circle cx="20.500" cy="19" r="2.300" stroke="#1b6fb0" strokeWidth="1.700" /></T>],
  ["explorer", <T key="i"><path d="M1 3h8l2 3h12v16H1z" fill="#f0b429" /><path d="M1 7h22v14H1z" fill="#ffd768" /><path d="M5 22v-9h14v9h-4v-5H9v5z" fill="#3b8fd8" /></T>, "w-[38px]"],
  ["chrome", <T key="i"><circle cx="12" cy="12" r="11.500" fill="#fbc116" /><path d="M12 12L2 6.200A11.500 11.500 0 0 1 22 6.200H12z" fill="#e33b2e" /><path d="M2 6.200A11.500 11.500 0 0 0 12 23.500l5-8.600-5-2.900z" fill="#2ba24c" /><circle cx="12" cy="12" r="5.400" fill="#fff" /><circle cx="12" cy="12" r="4.300" fill="#3f82f0" /></T>],
  ["cube", <T key="i"><path d="M2 5l10-4 10 4v14l-10 4.500L2 19z" fill="#9fb0cf" /><path d="M2 5l10 4v14.500L2 19z" fill="#c2d0e6" /><path d="M12 9l10-4v14l-10 4.500z" fill="#6377a4" /><path d="M2 5l10-4 10 4-10 4z" fill="#e4edf7" /></T>],
  ["npp", <T key="i"><path d="M2 2h17v21H2z" fill="#f3f7ea" stroke="#777" /><path d="M3 15h15v7H3z" fill="#7bc52c" /><path d="M6 8v5M8 8v5M10 10.500h3" stroke="#333" strokeWidth="1.200" /><path d="M12 18L20 3l3 2-7 14-4 2z" fill="#e9b52c" stroke="#8a6410" strokeWidth=".8" /><path d="M2 1h17v3H2z" fill="#ddd" /></T>],
  ["calc", <T key="i"><path d="M3 0h18v24H3z" fill="#717c86" /><path d="M5 2h14v5H5z" fill="#3fc0f0" /><path d="M5 9h4v4H5zM10 9h4v4h-4zM15 9h4v4h-4zM5 14h4v4H5zM10 14h4v4h-4zM5 19h4v3H5zM10 19h4v3h-4z" fill="#d5dade" /><path d="M15 14h4v8h-4z" fill="#1a4a80" /></T>],
  ["matlab", <T key="i"><path d="M1 14l6-3 7-9-3 15-4 2z" fill="#3b8fc8" /><path d="M7 11l7-10c2 5 5 14 9 18-4-2-7-1-9 4-2-3-3-4-5-5z" fill="#c4461d" /><path d="M14 1c2 5 5 14 9 18-4-2-7-1-9 4z" fill="#ee8a2c" /></T>],
  ["discord", <T key="i"><circle cx="12" cy="12" r="11.700" fill="#5865f2" /><path d="M7 7.500c3-1.500 7-1.500 10 0 2 3 2.500 5.500 2.300 8.500-1 .8-2 1.300-3.300 1.500l-1-1.500c-2 .5-4 .5-6 0l-1 1.500c-1.300-.2-2.300-.7-3.300-1.500C4.500 13 5 10.500 7 7.500z" fill="#fff" /><circle cx="9.500" cy="12.500" r="1.500" fill="#5865f2" /><circle cx="14.500" cy="12.500" r="1.500" fill="#5865f2" /></T>],
  ["vs", <T key="i"><path d="M12 12C9 8 7 7.500 4.500 8.500s-2.500 6 0 7 5 0 7.500-3.500 5-5 8-4 3 6.500 0 7.500-5-.5-8-3.500z" stroke="#5a4fa8" strokeWidth="2.800" /><path d="M12 12c2.500-3.500 5-5 8-4" stroke="#3a80c8" strokeWidth="2.400" /></T>],
  ["telegram", <T key="i"><circle cx="12" cy="12" r="11" fill="#2aa1da" /><path d="M5 11.500L18 6.500 16 18l-4-3-2 2-.5-3.500 6-5-7.500 4.500z" fill="#fff" /></T>],
  ["eclipse", <T key="i"><circle cx="11" cy="12" r="11" fill="#f09020" /><circle cx="13" cy="12" r="10.800" fill="#2b2258" /><path d="M3 9.500h20M2.500 12h21M3 14.500h20" stroke="#fff" strokeWidth="1.400" /></T>],
  ["drive", <T key="i"><path d="M8.500 2h7l8 14h-7z" fill="#fbbc04" /><path d="M8.500 2l3.500 6-8 14-3.500-6z" fill="#1ea362" /><path d="M4 22l3.500-6h16L20 22z" fill="#4688f1" /><path d="M16.500 16h7L20 22z" fill="#ea4335" /></T>],
  ["ide1", ide],
  ["ide2", ide, "w-[37px]"],
  ["vterm", <T key="i"><path d="M2 1h20v22H2z" fill="#1f7a38" /><path d="M5 3h4l3 12 3-12h4l-5 16h-4z" fill="#fff" /><path d="M7 8h8" stroke="#1f7a38" strokeWidth="1.300" /><text x="18" y="21.500" textAnchor="middle" fontSize="8" fontWeight="700" fontFamily="Liberation Sans,sans-serif" fill="#fff">s</text></T>, "w-[37px]"],
  ["monitor", <T key="i"><path d="M2 3l15-2v13L3 17z" fill="#ccc" /><path d="M6 5l17-1v13l-16 1z" fill="#eee" stroke="#999" /><path d="M8 7l13-.5V15l-13 .5z" fill="#fff" /><path d="M8 12l3-1 2-3 2 6 2-4 4 2" stroke="#2a70b8" /><ellipse cx="15" cy="21.500" rx="5" ry="1.800" fill="#ccc" /></T>, "w-[37px]"],
];

function Taskbar() {
  return (
    <div className="h-10 flex bg-[#1d1d1d] text-white">
      <div className="w-12 flex items-center justify-center">
        <T s={16} vb="0 0 16 16"><path d="M0 2.200l6.500-.9v6.200H0zM7.500 1.200L16 0v7.500H7.500zM0 8.500h6.500v6.200L0 13.800zM7.500 8.500H16V16l-8.500-1.200z" fill="#fff" /></T>
      </div>
      <div className="w-12 flex items-center justify-center">
        <T s={22} vb="0 0 22 22"><circle cx="13" cy="8" r="7" stroke="#fff" strokeWidth="1.700" /><path d="M8 13l-6.500 7.500" stroke="#fff" strokeWidth="2" /></T>
      </div>
      <div className="w-[50px] shrink-0 flex items-center justify-center pr-[2px]">
        <T s={16} vb="0 0 16 16"><path d="M.5 0v3.500h10V0M.5 16v-3.500h10V16M.5 5.500h10v5H.5zM14.500 0v2M14.500 8v8" stroke="#fff" strokeWidth="1.200" /><path d="M13.500 4h2.500v2.500h-2.500z" fill="#fff" /></T>
      </div>
      {task.map(([k, ic, u]) => (
        <div key={k} className={"w-[46.17px] shrink-0 flex flex-col items-center " + (k === "snip" || k === "explorer" ? "ml-[1.5px]" : "")}>
          <div className="h-[38px] flex items-center pt-[2px]">{ic}</div>
          {u && <div className={"h-[2px] bg-[#76b9ed] " + u} />}
        </div>
      ))}
      <div className="w-[45px] shrink-0 bg-[#4b4b4b] flex flex-col items-center">
        <div className="h-[38px] flex items-center pt-[2px]"><Logo s={24} /></div>
        <div className="h-[2px] w-full bg-[#76b9ed]" />
      </div>
      <div className="w-[57px] shrink-0 flex items-center justify-end pr-[6px]">
        <T s={26} vb="0 0 26 26"><path d="M15 1c8 5 8 21-5 23-4 0-6-2-7-4 9 1 14-8 12-19z" fill="#f5a83a" /><path d="M4 11a3.500 3.500 0 0 1 0-7 5 5 0 0 1 9 0 3.500 3.500 0 0 1 1 7z" fill="#a9c6f2" /><path d="M15 24a3 3 0 0 1 0-6 4 4 0 0 1 7-1 3.500 3.500 0 0 1 1 7z" fill="#c6daf7" /></T>
      </div>
      <div className={"w-[56px] pl-[1px] shrink-0 flex items-center text-[13.5px] tracking-[-0.4px] " + UI}>15°C</div>
      <div className="w-[15px] shrink-0 flex items-center"><T s={12} vb="0 0 12 12"><path d="M1 9l5-5 5 5" stroke="#fff" strokeWidth="1.300" /></T></div>
      <div className="w-[26px] shrink-0 flex items-center justify-end pr-[2px]">
        <T s={14} vb="0 0 14 14"><path d="M1 13A12 12 0 0 1 13 1" stroke="#888" strokeWidth="1.200" /><path d="M4 13a9 9 0 0 1 9-9M7 13a6 6 0 0 1 6-6M10 13a3 3 0 0 1 3-3" stroke="#fff" strokeWidth="1.200" /><path d="M1 13L13 1" stroke="#777" /></T>
      </div>
      <div className="w-[24px] shrink-0 flex items-center justify-center">
        <T s={16} vb="0 0 16 16"><path d="M5.500 4.500h9v7h-9M15.500 6.500v3M2.500 8v6M1 1v3M4 1v3M.5 4.500h4v2c0 1-1 1.500-2 1.500s-2-.5-2-1.500zM8 6l4 4M12 6l-4 4" stroke="#fff" /></T>
      </div>
      <div className="w-[24px] shrink-0 flex items-center justify-center">
        <T s={18} vb="0 0 18 18"><path d="M1 6.500h3l4-4v13l-4-4H1zM10.500 6.500c1 1.500 1 3.500 0 5M13 4.500c2 2.500 2 6.500 0 9M15.500 2.500c3 4 3 9 0 13" stroke="#fff" /></T>
      </div>
      <div className="w-[32px] shrink-0 flex items-center justify-center">
        <T s={24} vb="0 0 24 24"><rect x="1" y="6" width="22" height="13" stroke="#fff" /><path d="M4 9.500h17M4 12.500h17M4 16h2M8 16h9M19 16h2" stroke="#fff" strokeDasharray="2 1" strokeWidth="1.300" /></T>
      </div>
      <div className={"w-[34px] pl-[7px] shrink-0 flex items-center text-[12px] tracking-[-0.5px] " + UI}>ENG</div>
      <div className="w-[60px] shrink-0 flex flex-col items-center justify-center pl-[9px] text-[11.5px] leading-[17px] tracking-[-0.6px] whitespace-nowrap font-['Open_Sans','DejaVu_Sans',sans-serif]">
        <div>11:02 م</div>
        <div className="text-[10.5px] tracking-[-0.7px]">٢٠٢٤/٠٢/٠٩</div>
      </div>
      <div className="w-[50px] shrink-0 flex items-center justify-center">
        <T s={18} vb="0 0 18 18"><path d="M1.500 1.500h15v12h-4l-3.500 3v-3H1.500z" stroke="#fff" strokeWidth="1.200" /></T>
      </div>
      <div className="w-px ml-auto mr-[4px] shrink-0 bg-[#666]" />
    </div>
  );
}

const SGrip = () => (
  <div className="w-[3px] h-[25px] mt-[1px] shrink-0 bg-[repeating-linear-gradient(180deg,#9db3c0_0,#9db3c0_2px,#f4fafd_2px,#f4fafd_4px)]" />
);
const seg = "h-[26px] flex shrink-0 border-r border-[#a8c6d8] bg-linear-to-b from-[#e6f2f9] via-[#cfe5f1] to-[#aad0e5] ";

export default function App() {
  return (
    <div className={"w-[1366px] h-[768px] overflow-hidden flex flex-col bg-[#e2eaf1] text-black " + UI}>
      <div className="h-6 shrink-0 bg-white flex items-center pl-[2px]">
        <Logo />
        <span className="ml-[5px] w-[300px] whitespace-nowrap text-[12px] tracking-[-0.31px]">yarb - Proteus 8 Professional - Schematic Capture</span>
        <div className="ml-auto flex items-center">
          <svg width="110" height="14" viewBox="0 0 110 14" fill="none" stroke="#111" className="mr-[15px] mb-[4px]">
            <path d="M3 7.500h10M48.500 4.500h7v7h-7zM50.500 4.500v-2h7v7h-2M96 2.500l9 9M105 2.500l-9 9" />
          </svg>
        </div>
      </div>
      <div className="h-[18px] shrink-0 bg-white flex items-center pl-[7px] text-[12px] tracking-[-0.3px]">
        {menu.map(([m, w]) => <div key={m} className={w + " shrink-0"}>{m}</div>)}
      </div>
      <div className="h-[27px] shrink-0 flex items-start pt-[1px] gap-[4px] bg-[#edf1f5]">
        <Toolbar pressed={[]} gripW="w-[10px]" items={["newfile", "open", "save", "exit", "|", "home", "caps", "chip", "eye", "gerber", "design", "bom", "bits", "notes", "|", "help"]} />
        <Toolbar pressed={["grid"]} gripW="w-[12px]" items={["refresh", "grid", "|", "origin", "|", "pan", "zin", "zout", "zall", "zarea"]} />
        <Toolbar pressed={[]} items={["undo", "redo", "|", "cut", "copy", "paste", "|", "blkcopy", "blkmove", "blkrot", "blkdel", "|", "pick", "make", "pkg", "decomp"]} />
        <Toolbar pressed={["auto"]} items={["auto", "|", "find", "prop", "|", "addsh", "delsh", "hier", "|", "erc"]} />
      </div>
      <div className="h-[29px] shrink-0 flex items-end bg-linear-to-r from-[#e0e7ef] to-[#edf4fb]">
        <div className="relative w-[179px] h-[25px] shrink-0">
          <svg width="179" height="25" viewBox="0 0 179 25" className="absolute inset-0">
            <defs>
              <linearGradient id="tab" x2="0" y2="1"><stop offset="0" stopColor="#e8f4fb" /><stop offset="1" stopColor="#b9dcee" /></linearGradient>
            </defs>
            <path d="M0 23.500L20 1.500Q21 .5 23 .5H178.500V24.500H0z" fill="url(#tab)" />
            <path d="M0 23.500L20 1.500Q21 .5 23 .5H178.500V24.500" fill="none" stroke="#6b9dbb" />
          </svg>
          <div className="relative flex items-center h-[24px] pl-[21px]">
            <I><Caps /></I>
            <span className="ml-[2px] w-[113px] whitespace-nowrap text-[12px] font-semibold text-[#1d4260] tracking-[-0.1px] font-['Liberation_Sans',sans-serif]">Schematic Capture</span>
            <svg width="14" height="14" viewBox="0 0 14 14" className="ml-[2px]"><path d="M1.500 1.500l11 11M12.500 1.500l-11 11" stroke="#555" strokeWidth="1.800" /></svg>
          </div>
        </div>
        <div className="flex-1 h-px bg-[#6b9dbb]" />
      </div>
      <div className="h-[6px] shrink-0 bg-[#b8daec]" />

      <div className="h-[598px] shrink-0 flex">
        <div className="w-[30px] shrink-0">
          <div className="w-[28px] h-[484px] flex flex-col pl-[2px] border-r border-b border-[#9dbfd3] bg-linear-to-r from-[#e8f4fa] to-[#b9daeb]">
            <VGrip />
            <div className="mt-[1px]" />
            {leftA.map((n) => <VItem key={n} n={n} />)}
            <VSep />
            {leftB.map((n) => <VItem key={n} n={n} />)}
            <VSep />
            {leftC.map((n) => <VItem key={n} n={n} />)}
          </div>
        </div>
        <div className="w-[28px] shrink-0">
          <div className="w-[26px] h-[124px] flex flex-col items-center border-b border-[#9dbfd3] bg-linear-to-r from-[#e8f4fa] to-[#b9daeb]">
            <VGrip />
            <div className="mt-[1px]" />
            <VItem n="cw" /><VItem n="ccw" />
            <div className="w-[23px] h-[15px] ml-[2px] mt-[2px] bg-white text-[#1d3f78] text-[11px] leading-[14px] shrink-0">0°</div>
            <div className="mt-[4px]" />
            <VSep />
            <VItem n="fliph" /><VItem n="flipv" />
          </div>
        </div>
        <div className="w-[121px] shrink-0 flex flex-col">
          <div className="h-[101px] border border-[#666] shrink-0 overflow-hidden"><Overview /></div>
          <div className="h-[4px] shrink-0" />
          <div className="h-[492px] border border-[#666] bg-white shrink-0 flex flex-col">
            <div className="h-[24px] shrink-0 flex items-center pl-[2px] bg-linear-to-b from-[#e6f2f9] to-[#b9daeb]">
              <PL>P</PL>
              <div className="w-[6px]" />
              <PL>L</PL>
              <div className="ml-[20px] text-[12px] tracking-[-0.8px] font-['Liberation_Sans',sans-serif]">DEVICES</div>
            </div>
            <div className="flex-1 border border-t-0 border-[#0078d7] font-['Liberation_Sans',sans-serif] text-[12px] leading-[15px] tracking-[-0.6px]">
              {devices.map((d, i) => (
                <div key={d} className={"h-[13px] pl-[2px] " + (i === 0 ? "bg-[#0078d7] text-white" : "")}>{d}</div>
              ))}
            </div>
          </div>
        </div>
        <div className="w-[4px] shrink-0 bg-[#aecde0]" />
        <div className="w-[1179px] h-[596px] shrink-0 border border-[#666]"><Schematic /></div>
        <div className="flex-1 bg-[#b8daec]" />
      </div>

      <div className="h-[26px] shrink-0 flex bg-[#e2eaf1] text-[11.5px] tracking-[-0.43px]">
        <div className={seg + "w-[258px] items-center pl-[3px]"}>
          <SGrip />
          <svg width="152" height="16" viewBox="0 0 152 16" className="shrink-0">
            <path d="M18.500 2v12l9-6z" fill="#0bb00b" stroke="#077507" />
            <path d="M53.500 1.500h2v13h-2zM58.500 1.500v13l7-6.500z" fill="#0a68d8" stroke="#07479a" strokeWidth=".8" />
            <path d="M91.500 1.500h2.500v13h-2.500zM97 1.500h2.500v13H97z" fill="#0a68d8" stroke="#07479a" strokeWidth=".8" />
            <path d="M125.500 2.500h12v11h-12z" fill="#0a68d8" stroke="#07479a" />
          </svg>
          <div className="w-px h-[17px] bg-[#999]" />
          <svg width="32" height="14" viewBox="0 0 32 14" className="shrink-0">
            <circle cx="18" cy="7" r="6.500" fill="#128a12" stroke="#0a5a0a" />
            <path d="M18 2.500v2M16.500 6H18.500v5M16 11h5" stroke="#fff" strokeWidth="1.700" fill="none" />
          </svg>
          <span className="whitespace-nowrap">3 Message(s)</span>
        </div>
        <div className={seg + "w-[113px] ml-[4px] items-center pl-[3px]"}>
          <SGrip />
          <div className="ml-[6px] w-[97px] h-[20px] shrink-0 border border-[#999] bg-[#e1e1e1] flex items-center justify-between pl-[3px] pr-[4px]">
            <span className="whitespace-nowrap">Base Design</span>
            <svg width="9" height="6" viewBox="0 0 9 6"><path d="M.5 .5l4 4 4-4" fill="none" stroke="#444" /></svg>
          </div>
        </div>
        <div className={seg + "w-[413px] ml-[4px] items-center pl-[3px]"}>
          <SGrip />
          <span className="ml-[8px] whitespace-nowrap text-[#0a4a0a]">ANIMATING: 00:00:13.001652 (CPU load 53%)</span>
        </div>
        <div className={seg + "w-[569px] ml-[5px] items-center pl-[3px]"}>
          <SGrip />
          <div className="w-[269px] text-right shrink-0">+0.0</div>
          <div className="w-[266px] text-right shrink-0">+700.0</div>
          <div className="ml-[15px] text-[#1c1c90]">th</div>
        </div>
      </div>
      <Taskbar />
    </div>
  );
}
